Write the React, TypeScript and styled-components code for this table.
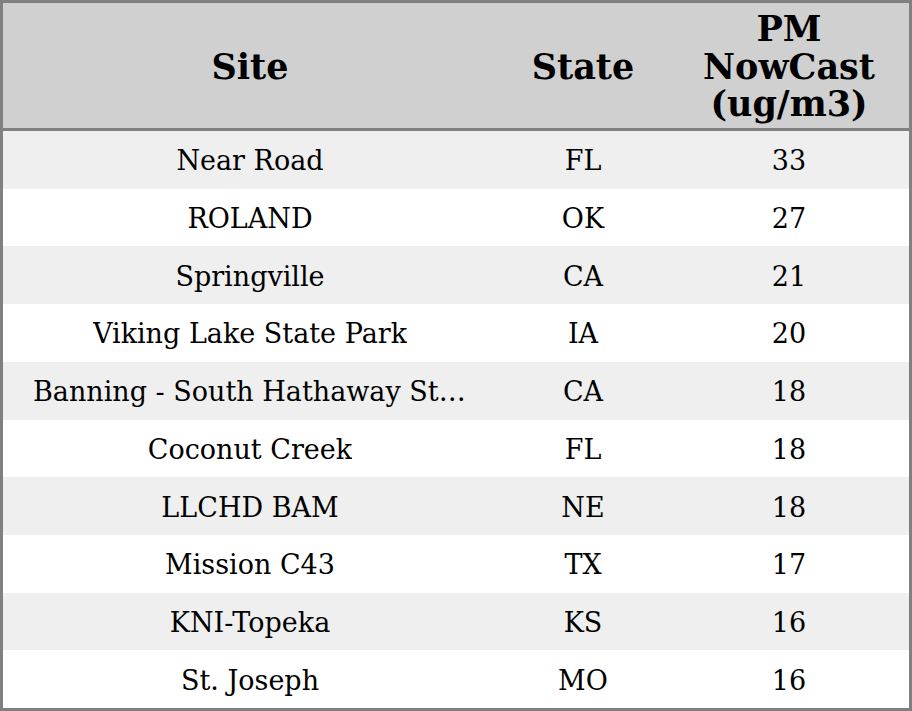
import { FC } from "react";
import styled, { createGlobalStyle } from "styled-components";

type Site = {
  name: string;
  state: string;
  pm: number;
};

const sites: Site[] = [
  { name: "Near Road", state: "FL", pm: 33 },
  { name: "ROLAND", state: "OK", pm: 27 },
  { name: "Springville", state: "CA", pm: 21 },
  { name: "Viking Lake State Park", state: "IA", pm: 20 },
  { name: "Banning - South Hathaway Street", state: "CA", pm: 18 },
  { name: "Coconut Creek", state: "FL", pm: 18 },
  { name: "LLCHD BAM", state: "NE", pm: 18 },
  { name: "Mission C43", state: "TX", pm: 17 },
  { name: "KNI-Topeka", state: "KS", pm: 16 },
  { name: "St. Joseph", state: "MO", pm: 16 },
];

const GlobalStyle = createGlobalStyle`
  html, body {
    margin: 0;
    padding: 0;
    height: 100%;
    background: #ffffff;
  }
  body {
    font-family: "DejaVu Serif", "Liberation Serif", serif;
    color: #000;
  }
`;

const Table = styled.div`
  box-sizing: border-box;
  width: 912px;
  height: 711px;
  border: 3px solid #808080;
  display: flex;
  flex-direction: column;
`;

const Grid = styled.div`
  display: grid;
  grid-template-columns: 494px 172px 240px;
`;

const HeaderRow = styled(Grid)`
  height: 125px;
  background: #d0d0d0;
  border-bottom: 3px solid #808080;
`;

const HeadCell = styled.div`
  display: flex;
  align-items: center;
  justify-content: center;
  text-align: center;
  font-size: 35px;
  font-weight: bold;
  line-height: 37.5px;
  padding-top: 2px;
`;

const Body = styled.div`
  flex: 1;
  display: flex;
  flex-direction: column;
`;

const Row = styled(Grid)<{ $striped: boolean }>`
  flex: 1;
  background: ${(p) => (p.$striped ? "#efefef" : "#ffffff")};
`;

const Cell = styled.div`
  min-width: 0;
  display: flex;
  align-items: center;
  justify-content: center;
  padding: 2px 30px 0;
  font-size: 27px;
`;

const Clip = styled.span`
  white-space: nowrap;
  overflow: hidden;
  text-overflow: ellipsis;
`;

const App: FC = () => {
  return (
    <>
      <GlobalStyle />
      <Table>
        <HeaderRow>
          <HeadCell>Site</HeadCell>
          <HeadCell>State</HeadCell>
          <HeadCell>
            PM
            <br />
            NowCast
            <br />
            (ug/m3)
          </HeadCell>
        </HeaderRow>
        <Body>
          {sites.map((s, i) => (
            <Row key={s.name} $striped={i % 2 === 0}>
              <Cell>
                <Clip>{s.name}</Clip>
              </Cell>
              <Cell>{s.state}</Cell>
              <Cell>{s.pm}</Cell>
            </Row>
          ))}
        </Body>
      </Table>
    </>
  );
};

export default App;
